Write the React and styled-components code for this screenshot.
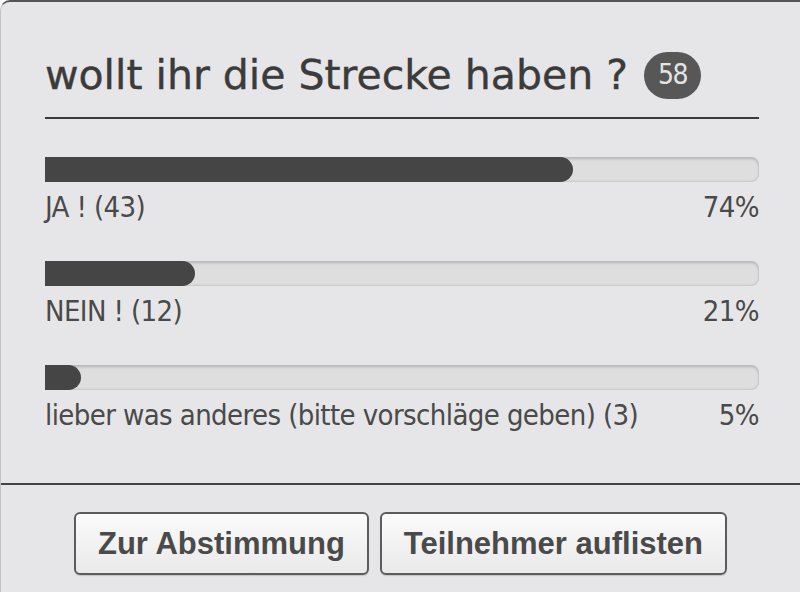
import React from "react";
import styled, { createGlobalStyle } from "styled-components";

const Global = createGlobalStyle`
  html, body { margin: 0; padding: 0; background: #ffffff; }
  body { font-family: "DejaVu Sans", sans-serif; }
`;

const Panel = styled.section`
  box-sizing: border-box;
  width: 100%;
  background: #e6e6e8;
  border-top: 2px solid #555;
  border-left: 1px solid #c4c4c6;
  border-top-left-radius: 10px;
`;

const Body = styled.div`
  padding: 49px 41px 50px 44px;
`;

const TitleRow = styled.h2`
  margin: 0;
  display: flex;
  align-items: center;
  gap: 16px;
  height: 48px;
  padding-bottom: 18px;
  border-bottom: 2px solid #3a3a3a;
  font-family: "DejaVu Sans", sans-serif;
  font-weight: normal;
  font-size: 41px;
  line-height: 48px;
  color: #3b3b3b;
  letter-spacing: 0;
  -webkit-text-stroke: 0.4px #3b3b3b;
`;

const Badge = styled.span`
  display: inline-flex;
  align-items: center;
  justify-content: center;
  width: 57px;
  height: 47px;
  border-radius: 24px;
  background: #575757;
  color: #e4e4e4;
  font-family: "DejaVu Sans Condensed", "DejaVu Sans", sans-serif;
  font-stretch: condensed;
  font-size: 28px;
  letter-spacing: -1.5px;
  line-height: 1;
  -webkit-text-stroke: 0;
`;

const Options = styled.div`
  display: flex;
  flex-direction: column;
  gap: 36px;
  margin-top: 38px;
`;

const Option = styled.div`
  display: flex;
  flex-direction: column;
  gap: 7px;
`;

const Track = styled.div`
  height: 25px;
  background: #dedede;
  border-radius: 0 8px 8px 0;
  box-shadow: inset 0 2px 3px rgba(0, 0, 0, 0.18), inset 0 -1px 2px rgba(0, 0, 0, 0.1);
  overflow: hidden;
`;

const Fill = styled.div`
  height: 100%;
  background: #454545;
  border-radius: 0 13px 13px 0;
`;

const Labels = styled.div`
  display: flex;
  justify-content: space-between;
  align-items: baseline;
  font-family: "DejaVu Sans Condensed", "DejaVu Sans", sans-serif;
  font-stretch: condensed;
  font-size: 29px;
  line-height: 36px;
  letter-spacing: -0.6px;
  color: #4a4a4a;
`;

const Footer = styled.div`
  display: flex;
  justify-content: center;
  gap: 11px;
  padding: 27px 0 17px;
  border-top: 2px solid #444;
`;

const Button = styled.button`
  box-sizing: border-box;
  height: 63px;
  padding: 0 22px;
  border: 2px solid #5c5c5c;
  border-radius: 6px;
  background: linear-gradient(#fbfbfb, #e9e9e9);
  box-shadow: 0 1px 1px rgba(0, 0, 0, 0.15);
  font-family: "Liberation Sans", Arial, sans-serif;
  font-weight: bold;
  font-size: 31px;
  color: #4a4a4a;
  cursor: pointer;
`;

const options = [
  { label: "JA ! (43)", pct: 74 },
  { label: "NEIN ! (12)", pct: 21 },
  { label: "lieber was anderes (bitte vorschläge geben) (3)", pct: 5 },
];

export default function App() {
  return (
    <>
      <Global />
      <Panel>
        <Body>
          <TitleRow>
            <span>wollt ihr die Strecke haben ?</span>
            <Badge>58</Badge>
          </TitleRow>
          <Options>
            {options.map((o) => (
              <Option key={o.label}>
                <Track>
                  <Fill style={{ width: `${o.pct}%` }} />
                </Track>
                <Labels>
                  <span>{o.label}</span>
                  <span>{o.pct}%</span>
                </Labels>
              </Option>
            ))}
          </Options>
        </Body>
        <Footer>
          <Button>Zur Abstimmung</Button>
          <Button>Teilnehmer auflisten</Button>
        </Footer>
      </Panel>
    </>
  );
}
